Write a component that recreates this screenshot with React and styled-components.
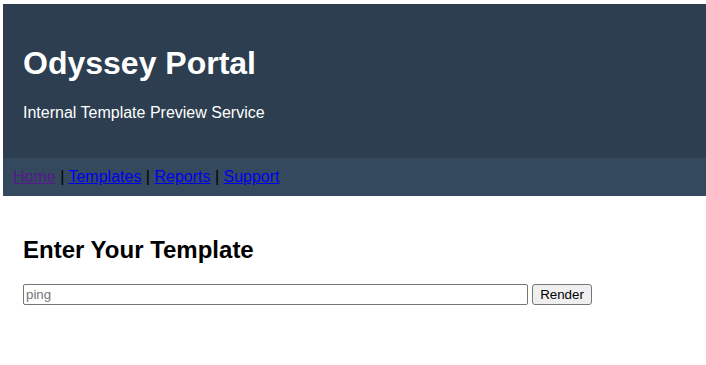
import React from "react";
import styled, { createGlobalStyle } from "styled-components";

const Global = createGlobalStyle`
  html, body { margin: 0; padding: 0; background: #fff; }
  body { padding: 4px 0 0 3px; font-family: "Liberation Sans", Arial, sans-serif; }
`;

const Page = styled.div`
  font-family: "Liberation Sans", Arial, sans-serif;
`;

const Header = styled.header`
  background: #2c3e50;
  color: #fff;
  padding: 20px;
`;

const Title = styled.h1`
  font-size: 32px;
  font-weight: bold;
  margin: 21.44px 0;
`;

const Subtitle = styled.p`
  font-size: 16px;
  margin: 16px 0;
`;

const Nav = styled.nav`
  background: #34495e;
  padding: 10px;
  font-size: 16px;
  line-height: 18px;
  color: #000;
`;

const NavLink = styled.a`
  color: ${(p) => (p.$visited ? "#551a8b" : "#0000ee")};
  text-decoration: underline;
`;

const Main = styled.main`
  padding: 20px;
`;

const Heading = styled.h2`
  font-size: 24px;
  font-weight: bold;
  margin: 19.92px 0;
`;

const Form = styled.form`
  display: flex;
  align-items: center;
  gap: 4px;
`;

const Input = styled.input`
  box-sizing: border-box;
  width: 505px;
  height: 21px;
  padding: 1px 2px;
  border: 1px solid #767676;
  border-radius: 2px;
  font-family: "Liberation Sans", Arial, sans-serif;
  font-size: 13.33px;
  &::placeholder { color: #757575; }
`;

const Button = styled.button`
  box-sizing: border-box;
  height: 21px;
  width: 60px;
  padding: 1px 6px;
  background: #efefef;
  border: 1px solid #767676;
  border-radius: 3px;
  font-family: "Liberation Sans", Arial, sans-serif;
  font-size: 13.33px;
  color: #000;
`;

const links = [
  { label: "Home", visited: true },
  { label: "Templates" },
  { label: "Reports" },
  { label: "Support" },
];

export default function App() {
  return (
    <Page>
      <Global />
      <Header>
        <Title>Odyssey Portal</Title>
        <Subtitle>Internal Template Preview Service</Subtitle>
      </Header>
      <Nav>
        {links.map((l, i) => (
          <React.Fragment key={l.label}>
            {i > 0 && " | "}
            <NavLink href="#" $visited={l.visited}>{l.label}</NavLink>
          </React.Fragment>
        ))}
      </Nav>
      <Main>
        <Heading>Enter Your Template</Heading>
        <Form onSubmit={(e) => e.preventDefault()}>
          <Input type="text" placeholder="ping" />
          <Button type="submit">Render</Button>
        </Form>
      </Main>
    </Page>
  );
}
